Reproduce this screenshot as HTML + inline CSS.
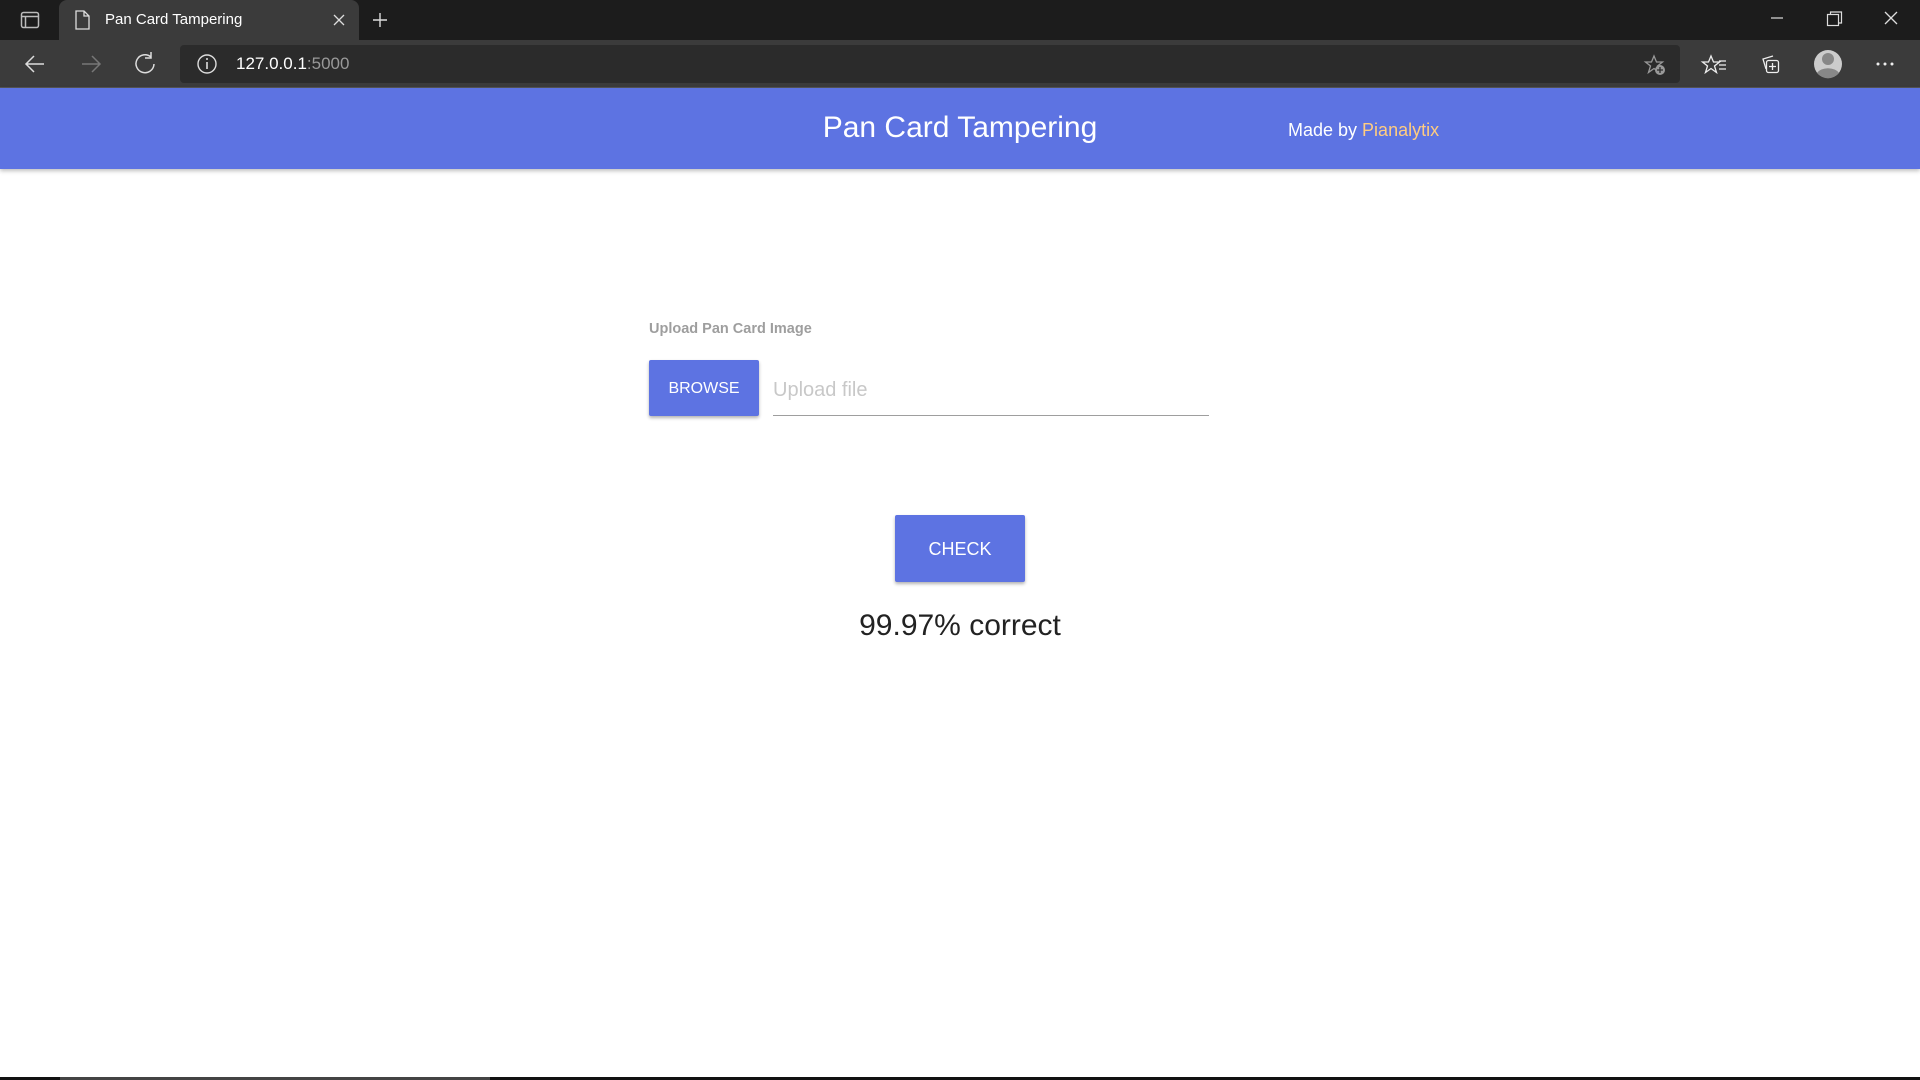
<!DOCTYPE html>
<html><head><meta charset="utf-8"><style>
*{margin:0;padding:0;box-sizing:border-box}
body{width:1920px;height:1080px;overflow:hidden;background:#fff;font-family:"Liberation Sans",sans-serif;position:relative}
.abs{position:absolute}
</style></head><body>
<div class="abs" style="left:0;top:0;width:1920px;height:40px;background:#1c1c1c"></div>
<div class="abs" style="left:59px;top:0;width:300px;height:41px;background:#3b3b3b;border-radius:8px 8px 0 0"></div>
<svg class="abs" style="left:0;top:0" width="1920" height="88">
 <rect x="21.5" y="12.5" width="17" height="15" rx="2" fill="none" stroke="#bbb" stroke-width="1.5"/>
 <line x1="22" y1="16.5" x2="38" y2="16.5" stroke="#bbb" stroke-width="1.5"/><line x1="25.5" y1="16" x2="25.5" y2="27" stroke="#bbb" stroke-width="1.5"/>
 <path d="M76 11h8l5 5v13h-13z M84 11v5h5" fill="none" stroke="#ddd" stroke-width="1.3"/>
 <path d="M334 15l10 10M344 15l-10 10" stroke="#ddd" stroke-width="1.3"/>
 <path d="M380 13v14M373 20h14" stroke="#ddd" stroke-width="1.4"/>
 <path d="M1771 18h12" stroke="#ddd" stroke-width="1.2"/>
 <rect x="1827.5" y="14.5" width="11" height="11" fill="none" stroke="#ddd" stroke-width="1.2"/><path d="M1830.5 14.5v-2.5h11v11h-2.5" fill="none" stroke="#ddd" stroke-width="1.2"/>
 <path d="M1885 12l12 12M1897 12l-12 12" stroke="#ddd" stroke-width="1.3"/>
</svg>
<div class="abs" style="left:105px;top:11px;color:#fff;font-size:15px">Pan Card Tampering</div>
<div class="abs" style="left:0;top:40px;width:1920px;height:48px;background:#3b3b3b;border-bottom:1px solid #555"></div>
<div class="abs" style="left:180px;top:45px;width:1500px;height:38px;background:#2b2b2b;border-radius:4px"></div>
<svg class="abs" style="left:0;top:40px" width="1920" height="48">
 <path d="M26 24h18M34 16l-8 8 8 8" fill="none" stroke="#ddd" stroke-width="1.5"/>
 <path d="M82 24h18M92 16l8 8-8 8" fill="none" stroke="#777" stroke-width="1.5"/>
 <path d="M151 17a9 9 0 1 0 3 7M151 12v6h-6" fill="none" stroke="#ddd" stroke-width="1.5"/>
 <circle cx="207" cy="24" r="9" fill="none" stroke="#ddd" stroke-width="1.4"/><path d="M207 22v7" stroke="#ddd" stroke-width="1.6"/><circle cx="207" cy="19" r="1" fill="#ddd"/>
 <path d="M1654 16l2.5 6h6l-5 4 2 6.5-5.5-4-5.5 4 2-6.5-5-4h6z" fill="none" stroke="#999" stroke-width="1.3"/><circle cx="1660" cy="30" r="5" fill="#999"/><path d="M1660 27v6M1657 30h6" stroke="#2b2b2b" stroke-width="1.3"/>
 <path d="M1711 16l2.5 6h6l-5 4 2 6.5-5.5-4-5.5 4 2-6.5-5-4h6z" fill="none" stroke="#eee" stroke-width="1.3"/><path d="M1719 21h7M1719 25h7M1719 29h7" stroke="#eee" stroke-width="1.2"/>
 <path d="M1766 29l-3-10 10-3" fill="none" stroke="#eee" stroke-width="1.3"/><rect x="1766.5" y="20.5" width="12" height="12" rx="2" fill="none" stroke="#eee" stroke-width="1.3"/><path d="M1772.5 23v7M1769 26.5h7" stroke="#eee" stroke-width="1.3"/>
 <circle cx="1828" cy="24" r="14" fill="#ccc"/><circle cx="1828" cy="19" r="6" fill="#888"/><path d="M1817 33a12 8 0 0 1 22 0a14 14 0 0 1-22 0z" fill="#888"/>
 <circle cx="1878" cy="24" r="1.5" fill="#eee"/><circle cx="1885" cy="24" r="1.5" fill="#eee"/><circle cx="1892" cy="24" r="1.5" fill="#eee"/>
</svg>
<div class="abs" style="left:236px;top:54px;font-size:17px;color:#fff">127.0.0.1<span style="color:#999">:5000</span></div>
<div class="abs" style="left:0;top:88px;width:1920px;height:81px;background:#5d73e2;box-shadow:0 2px 4px rgba(0,0,0,.25)"></div>
<div class="abs" style="left:760px;top:111px;width:400px;text-align:center;color:#fff;font-size:30px">Pan Card Tampering</div>
<div class="abs" style="left:1288px;top:120px;color:#fff;font-size:18px">Made by <span style="color:#ffcc80">Pianalytix</span></div>
<div class="abs" style="left:649px;top:321px;color:#9e9e9e;font-size:14.5px;font-weight:bold">Upload Pan Card Image</div>
<div class="abs" style="left:649px;top:360px;width:110px;height:56px;background:#5d73e2;border-radius:2px;box-shadow:0 2px 3px rgba(0,0,0,.3);color:#fff;font-size:16px;text-align:center;line-height:58px">BROWSE</div>
<div class="abs" style="left:773px;top:379px;color:#c8c8c8;font-size:20px">Upload file</div>
<div class="abs" style="left:773px;top:415px;width:436px;height:1px;background:#9e9e9e"></div>
<div class="abs" style="left:895px;top:515px;width:130px;height:67px;background:#5d73e2;border-radius:2px;box-shadow:0 2px 3px rgba(0,0,0,.3);color:#fff;font-size:18px;text-align:center;line-height:69px">CHECK</div>
<div class="abs" style="left:760px;top:609px;width:400px;text-align:center;color:#222;font-size:30px">99.97% correct</div>
<div class="abs" style="left:0;top:1077px;width:1920px;height:3px;background:#111"></div>
<div class="abs" style="left:60px;top:1077px;width:430px;height:3px;background:#444"></div>
</body></html>
